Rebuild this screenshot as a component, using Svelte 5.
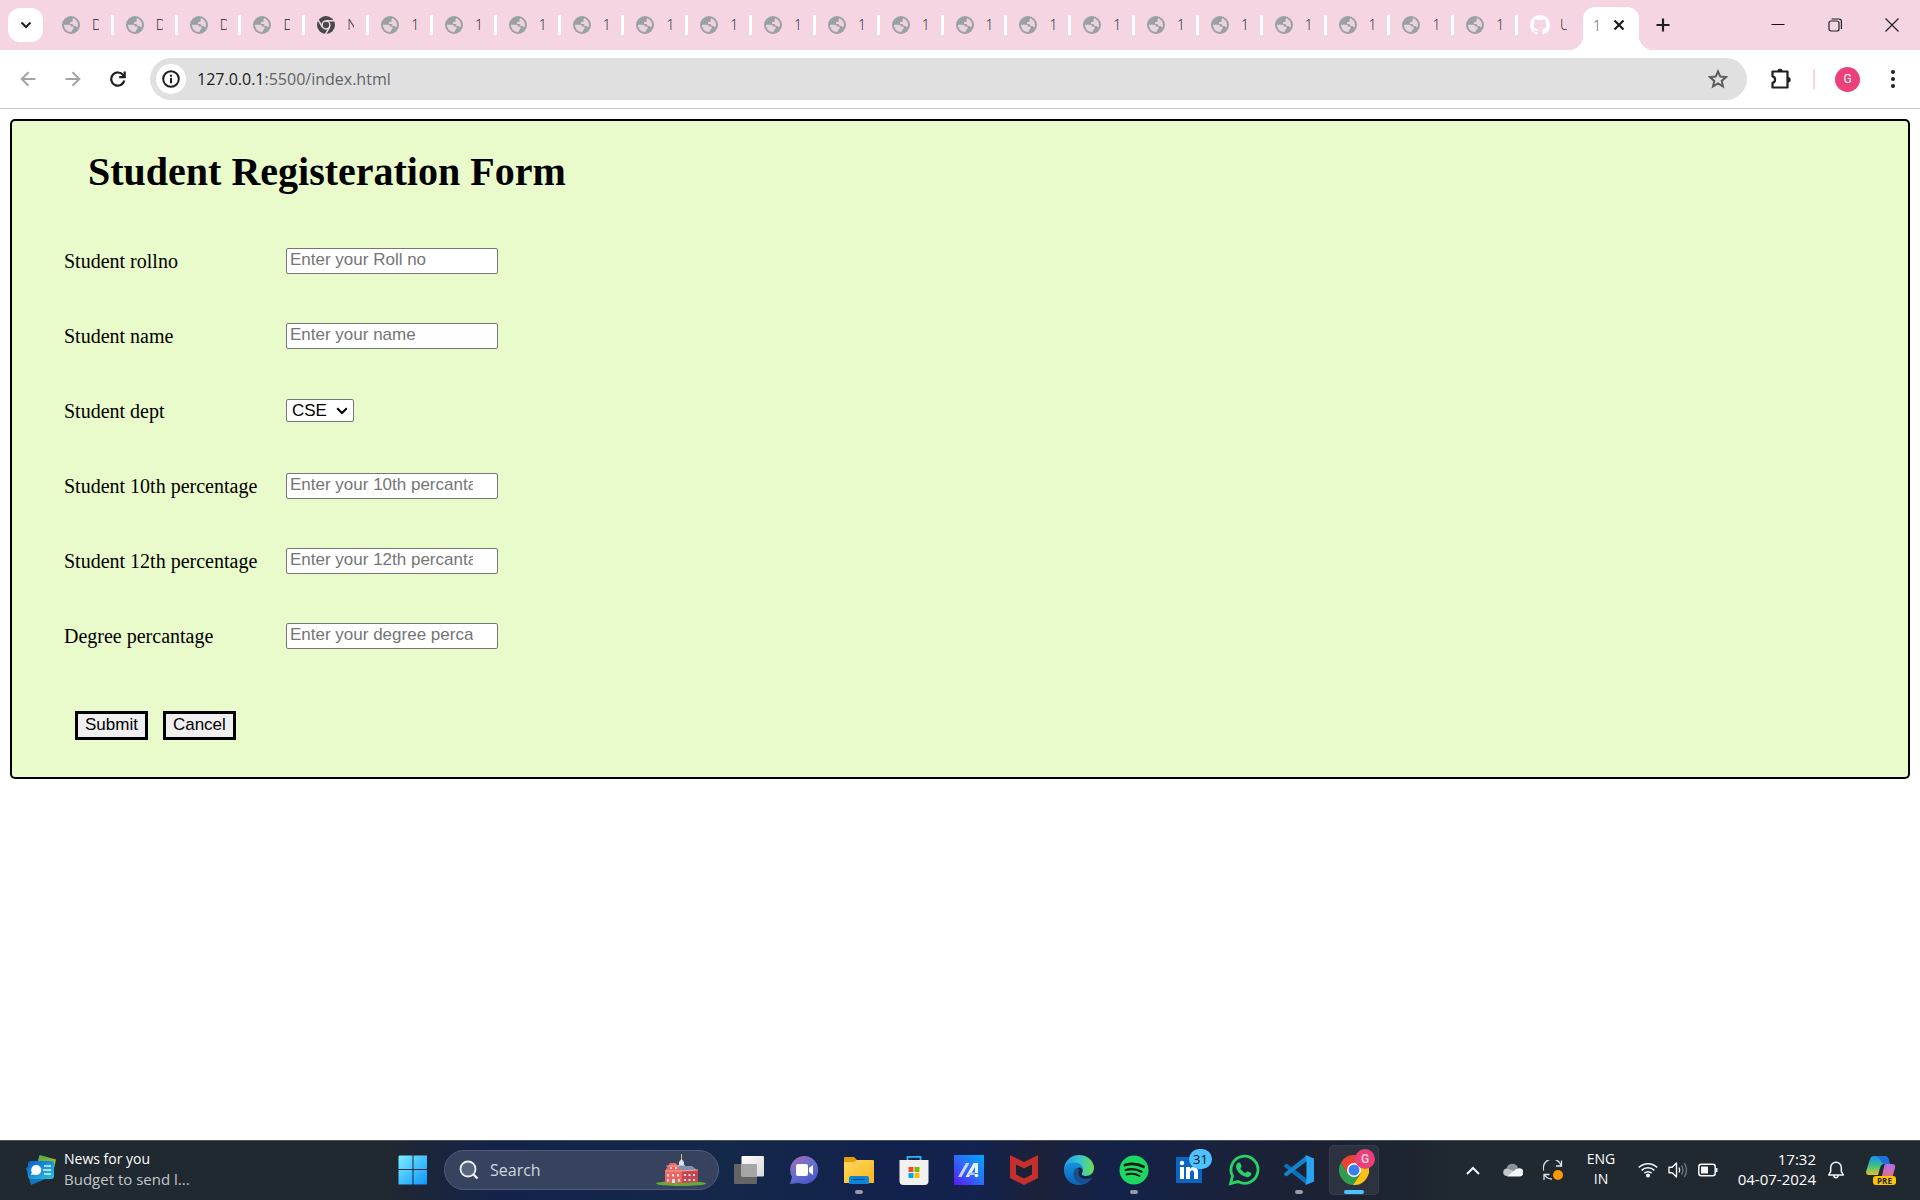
<script>
  const tabs = ['D', 'D', 'D', 'D', 'N', ...Array(18).fill('1')];

  const fields = [
    { id: 'rollno', label: 'Student rollno', placeholder: 'Enter your Roll no' },
    { id: 'name', label: 'Student name', placeholder: 'Enter your name' },
    { id: 'dept', label: 'Student dept', options: ['CSE', 'ECE', 'EEE', 'IT'] },
    { id: 'tenth', label: 'Student 10th percentage', placeholder: 'Enter your 10th percantage' },
    { id: 'twelfth', label: 'Student 12th percentage', placeholder: 'Enter your 12th percantage' },
    { id: 'degree', label: 'Degree percantage', placeholder: 'Enter your degree percantage' }
  ];
</script>

<div class="screen">
  <header class="tabstrip">
    <button class="tabsearch" aria-label="Search tabs">
      <svg width="12" height="8" viewBox="0 0 12 8"><path d="M1.5 1.5 6 6l4.500-4.500" fill="none" stroke="#1f1f1f" stroke-width="2" /></svg>
    </button>
    <div class="tabs">
      {#each tabs as t}
        <button class="tab">
          {#if t === 'N'}
            <svg width="18" height="18" viewBox="0 0 18 18">
              <circle cx="9" cy="9" r="9" fill="#46494d" />
              <circle cx="9" cy="9" r="3.900" fill="none" stroke="#f6d5e3" stroke-width="1.500" />
              <path d="M9 4.800h8.200M5.400 11.200 1.300 4.200M12.600 11.200 8.600 18" stroke="#f6d5e3" stroke-width="1.500" />
            </svg>
          {:else}
            <svg width="18" height="18" viewBox="0 0 18 18">
              <circle cx="9" cy="9" r="9" fill="#9aa0a6" />
              <path d="M2 8.800h5.500q1.500 0 1.500 1.700h2.300q1.300 1.900-.8 3.200L9.300 16C5 16.200 2 13 2 8.800z" fill="#ead3dd" />
              <path d="M11 2.300C14 3 16 6 16 9c-.1 1-.5 1.900-1 2.500L13.500 10h-1.800L10.500 8H8V6.200l2.500-.4V4z" fill="#ead3dd" />
            </svg>
          {/if}
          <span>{t}</span>
        </button>
      {/each}
    </div>
    <button class="tab github">
      <svg width="20" height="20" viewBox="0 0 16 16"><path fill="#fff" d="M8 0C3.580 0 0 3.580 0 8c0 3.540 2.290 6.530 5.470 7.590.4.070.55-.17.55-.38 0-.19-.01-.82-.01-1.490-2.010.37-2.530-.49-2.690-.94-.09-.23-.48-.94-.82-1.130-.28-.15-.68-.52-.01-.53.63-.01 1.080.58 1.230.82.72 1.210 1.870.87 2.330.66.07-.52.28-.87.51-1.070-1.780-.2-3.640-.89-3.640-3.950 0-.87.31-1.590.82-2.150-.08-.2-.36-1.020.08-2.120 0 0 .67-.21 2.200.82a7.600 7.600 0 0 1 4 0c1.530-1.040 2.200-.82 2.200-.82.44 1.100.16 1.920.08 2.120.51.56.82 1.270.82 2.150 0 3.070-1.870 3.750-3.650 3.950.29.25.54.73.54 1.480 0 1.070-.01 1.930-.01 2.200 0 .21.15.46.55.38A8 8 0 0 0 16 8c0-4.420-3.580-8-8-8z" /></svg>
      <span>U</span>
    </button>
    <div class="active">
      <span>1</span>
      <button aria-label="Close tab">
        <svg width="12" height="12" viewBox="0 0 12 12"><path d="M1.500 1.500l9 9m0-9l-9 9" stroke="#1f1f1f" stroke-width="2.200" /></svg>
      </button>
    </div>
    <button class="newtab" aria-label="New tab">
      <svg width="14" height="14" viewBox="0 0 14 14"><path d="M7 .5v13M.5 7h13" stroke="#1f1f1f" stroke-width="2.200" /></svg>
    </button>
    <div class="window">
      <button aria-label="Minimize"><svg width="14" height="14" viewBox="0 0 14 14"><path d="M.5 6.500h13" stroke="#111" /></svg></button>
      <button aria-label="Restore"><svg width="14" height="14" viewBox="0 0 14 14" fill="none" stroke="#222" stroke-width="1.200"><rect x="1" y="3" width="10" height="10" rx="2" /><path d="M3.500 1h7.500a2.500 2.500 0 0 1 2.400 2.500V11" /></svg></button>
      <button aria-label="Close"><svg width="14" height="14" viewBox="0 0 14 14"><path d="M.5.5l13 13m0-13l-13 13" stroke="#222" stroke-width="1.200" /></svg></button>
    </div>
  </header>

  <nav class="toolbar">
    <button class="nav" aria-label="Back"><svg width="16" height="16" viewBox="0 0 16 16" fill="none" stroke="#a3a3a3" stroke-width="2"><path d="M15.500 8H2M8.500 1.200 1.700 8l6.800 6.800" /></svg></button>
    <button class="nav" aria-label="Forward"><svg width="16" height="16" viewBox="0 0 16 16" fill="none" stroke="#a3a3a3" stroke-width="2"><path d="M.5 8H14M7.500 1.200 14.300 8l-6.800 6.800" /></svg></button>
    <button class="nav" aria-label="Reload"><svg width="16" height="16" viewBox="0 0 16 16" fill="none" stroke="#1f1f1f" stroke-width="2.200"><path d="M14.300 9.500A6.600 6.600 0 1 1 13.200 4.200L14.500 6" /><path d="M14.700.5v5.700H9.200" /></svg></button>
    <div class="omnibox">
      <button class="info" aria-label="View site information">
        <svg width="18" height="18" viewBox="0 0 18 18"><circle cx="9" cy="9" r="7.800" fill="none" stroke="#1f1f1f" stroke-width="2" /><path d="M9 8v5.200M9 4.700v2" stroke="#1f1f1f" stroke-width="2" /></svg>
      </button>
      <span class="url">127.0.0.1<i>:5500/index.html</i></span>
      <button class="star" aria-label="Bookmark this tab"><svg width="20" height="20" viewBox="0 0 20 20"><path d="M10 2.400l2.300 5.200 5.700.5-4.300 3.800 1.300 5.600-5-3-5 3 1.300-5.600L2 8.100l5.700-.5z" fill="none" stroke="#5a5c5e" stroke-width="2" /></svg></button>
    </div>
    <button class="ext" aria-label="Extensions"><svg width="22" height="22" viewBox="0 0 22 22"><path d="M2.500 3.500h15v16h-15v-4.700c3.400-.5 3.400-6 0-6.500z" fill="none" stroke="#1f1f1f" stroke-width="2.200" stroke-linejoin="round" /><path d="M7.300 3.500a2.700 2.700 0 0 1 5.400 0zM18 9a2.700 2.700 0 0 1 0 5.400z" fill="#1f1f1f" /></svg></button>
    <span class="bar"></span>
    <button class="avatar" aria-label="Profile">G</button>
    <button class="more" aria-label="Menu"><svg width="4" height="18" viewBox="0 0 4 18" fill="#1f1f1f"><circle cx="2" cy="2" r="2" /><circle cx="2" cy="9" r="2" /><circle cx="2" cy="16" r="2" /></svg></button>
  </nav>

  <main>
    <form onsubmit={(e) => e.preventDefault()}>
      <h1>Student Registeration Form</h1>
      <div class="rows">
        {#each fields as f}
          <div class="row">
            <label for={f.id}>{f.label}</label>
            {#if f.options}
              <span class="selectwrap">
                <select id={f.id}>
                  {#each f.options as o}<option>{o}</option>{/each}
                </select>
                <svg width="12" height="8" viewBox="0 0 12 8"><path d="M1.200 1.200 6 6l4.800-4.800" fill="none" stroke="#000" stroke-width="2" /></svg>
              </span>
            {:else}
              <input id={f.id} placeholder={f.placeholder} />
            {/if}
          </div>
        {/each}
      </div>
      <div class="actions">
        <button type="submit">Submit</button>
        <button type="reset">Cancel</button>
      </div>
    </form>
  </main>

  <footer class="taskbar">
    <button class="widget">
      <svg width="30" height="30" viewBox="0 0 30 30">
        <defs>
          <linearGradient id="nb" x2="1" y2="1"><stop stop-color="#0b62d0" /><stop offset="1" stop-color="#29c3e0" /></linearGradient>
          <linearGradient id="ng" x2="1" y2="1"><stop stop-color="#3fae54" /><stop offset="1" stop-color="#d9b512" /></linearGradient>
        </defs>
        <path d="M13.500 0 30 4.500 27 18 10 12z" fill="url(#ng)" />
        <path d="M0 13l4-2 18 12L5 30z" fill="#1277bd" />
        <rect x="2" y="6" width="26" height="18" rx="3" fill="url(#nb)" />
        <path d="M10.500 10a5 5 0 1 1-2.400 9.500L5 20l.8-2.600A5 5 0 0 1 10.500 10z" fill="#fff" />
        <path d="M18 11h7M17 15h8M18 19h7" stroke="#d9f4ff" stroke-width="1.600" />
      </svg>
      <span class="news">News for you<small>Budget to send l...</small></span>
    </button>

    <div class="apps">
      <button class="app" aria-label="Start">
        <svg width="30" height="30" viewBox="0 0 30 30">
          <defs><linearGradient id="win" gradientUnits="userSpaceOnUse" x1="0" y1="0" x2="30" y2="30"><stop stop-color="#7df0ff" /><stop offset="1" stop-color="#0a93ff" /></linearGradient></defs>
          <path d="M1.500.5H14.500V14H.5V1.500zM15.500 .5h13.500V14H15.500zM.5 15H14.500v14.500H.5zM15.500 15h13.500v14.500H15.500z" fill="url(#win)" />
        </svg>
      </button>
      <label class="search">
        <svg width="20" height="20" viewBox="0 0 20 20"><circle cx="9" cy="9" r="7.500" fill="#58637c" stroke="#eef0f4" stroke-width="1.800" /><path d="M14.500 14.500 18.500 18.500" stroke="#eef0f4" stroke-width="2.400" /></svg>
        <input type="text" placeholder="Search" aria-label="Search" />
        <svg width="50" height="32" viewBox="0 0 50 32">
          <ellipse cx="25" cy="29.500" rx="25" ry="2.500" fill="#68a83a" />
          <path d="M25.500 0v6" stroke="#d9b860" stroke-width="1" />
          <path d="M23 11v-3l2.500-3L28 8v3z" fill="#d5e2f5" /><path d="M22 11h7v6h-7z" fill="#a9bde0" />
          <path d="M19 17l5-5 12 0 6 5-16 3z" fill="#8290ad" />
          <path d="M9 17l3-5 2-3h6l2 3 4 5v12H9z" fill="#ee655e" /><path d="M26 17l16-1v12l-16 1z" fill="#c9454d" />
          <path d="M9 17h17M10.500 12H22M26 17l16-1" stroke="#f4a59b" />
          <path d="M11 20h2v2.500h-2zM16 20h2v2.500h-2zM21 20h2v2.500h-2zM11 25h2v2.500h-2zM16 25h3v4h-3zM22 25h2v2.500h-2zM14 13h2v2h-2zM19 13h2v2h-2zM28 20h2v2h-2zM32.500 20h2v2h-2zM37 20h2v2h-2zM28 25h2v2h-2zM32.500 25h2v2h-2zM37 25h2v2h-2z" fill="#cfe0f2" />
        </svg>
      </label>
      <button class="app" aria-label="Task view">
        <svg width="30" height="28" viewBox="0 0 30 28">
          <defs><linearGradient id="tv" x2="1" y2="1"><stop stop-color="#fff" /><stop offset="1" stop-color="#d8d8d8" /></linearGradient></defs>
          <rect y="8" width="23" height="20" rx="1" fill="#646464" /><rect x="7.500" width="22.500" height="20.500" rx="1" fill="url(#tv)" /><path d="M7.500 8H22q1 0 1 1v11.500H7.500z" fill="#a6a6a6" />
        </svg>
      </button>
      <button class="app" aria-label="Chat">
        <svg width="30" height="30" viewBox="0 0 30 30">
          <defs><linearGradient id="ch" x1="0.200" x2="0.800" y2="1"><stop stop-color="#a169b8" /><stop offset=".5" stop-color="#6270cf" /><stop offset="1" stop-color="#4b4fc4" /></linearGradient></defs>
          <path d="M15 1a14 14 0 1 1-5 27L1 29l2-7A14 14 0 0 1 15 1z" fill="url(#ch)" />
          <rect x="7" y="9" width="12" height="12" rx="2" fill="#fff" /><path d="M20 13l4-3v10l-4-3z" fill="#fff" />
        </svg>
      </button>
      <button class="app run" aria-label="File Explorer">
        <svg width="30" height="28" viewBox="0 0 30 28">
          <defs><linearGradient id="fo" x2="1" y2="1"><stop stop-color="#ffd75e" /><stop offset="1" stop-color="#fbb61a" /></linearGradient></defs>
          <path d="M0 2q0-1 1-1h9l3 3h14v8H0z" fill="#e59f0b" /><path d="M0 6h10l3-2h16q1 0 1 1v22H0z" fill="url(#fo)" />
          <path d="M5 28v-6q0-2 2-2h16q2 0 2 2v6z" fill="#0f84d6" /><path d="M9 23.500h12" stroke="#0a4c8c" stroke-width="1.200" />
        </svg>
      </button>
      <button class="app" aria-label="Microsoft Store">
        <svg width="30" height="30" viewBox="0 0 30 30">
          <path d="M8.500 6V1.800h13V6" fill="none" stroke="#2fb4ee" stroke-width="1.800" /><path d="M.5 5h29v21q0 4-4 4h-21q-4 0-4-4z" fill="#f1f1f1" />
          <path d="M9.500 12h5v5h-5z" fill="#f25022" /><path d="M15.500 12h5v5h-5z" fill="#7fba00" /><path d="M9.500 18h5v5h-5z" fill="#00a4ef" /><path d="M15.500 18h5v5h-5z" fill="#ffb900" />
        </svg>
      </button>
      <button class="app" aria-label="MyASUS">
        <svg width="30" height="30" viewBox="0 0 30 30">
          <defs><linearGradient id="as" x1="0" y1="1" x2="1" y2="0"><stop stop-color="#5a16f5" /><stop offset=".5" stop-color="#2b6cf8" /><stop offset="1" stop-color="#00a8ff" /></linearGradient></defs>
          <path d="M0 0h30v30H0z" fill="url(#as)" /><path d="M4 22 12 8h3.500L7.500 22z" fill="#c9d2ff" /><path d="M11.500 22 19.500 8H24v10h-3v-6l-6 10z" fill="#eaf0ff" /><path d="M15 17.500h5.500V20h-7z" fill="#b8c8ff" /><circle cx="22.500" cy="20.500" r="1.800" fill="#fff" />
        </svg>
      </button>
      <button class="app" aria-label="McAfee">
        <svg width="28" height="30" viewBox="0 0 28 30"><path d="M0 0l14 7L28 0v23l-14 7-14-7z" fill="#c5302d" /><path d="M6 9.500l8 4 8-4v10l-8 4-8-4z" fill="#1b2135" /></svg>
      </button>
      <button class="app" aria-label="Edge">
        <svg width="30" height="30" viewBox="0 0 30 30">
          <defs>
            <linearGradient id="e1" x2="1"><stop stop-color="#1f9fe0" /><stop offset=".5" stop-color="#35c4d4" /><stop offset="1" stop-color="#6fe04b" /></linearGradient>
            <linearGradient id="e2" x2="0" y2="1"><stop stop-color="#1791dd" /><stop offset="1" stop-color="#0b62b8" /></linearGradient>
          </defs>
          <path d="M0 15C0 6 7 0 15 0c9 0 15 6.500 15 13 0 5-4 8-8 8-3 0-5-1-4-3 2-3 0-7-6-7-5 0-10 2-12 4z" fill="url(#e1)" />
          <path d="M0 15c1-5 5-7.500 10-7.500 6 0 9 3.500 9 7.500-1-2-3-3-5-2-4 2-4 7-1 11 3 3 7 4 11 3-3 2-6 3-9 3C7 30 0 24 0 15z" fill="url(#e2)" />
          <path d="M11 14c-4 5 0 15 9 15 4-1 7-4 8.500-6.500-5 2-11 2-13-1.500-1.500-2-1-4 0-5.500-1-2-3-2.500-4.500-1.500z" fill="#15508f" />
        </svg>
      </button>
      <button class="app run" aria-label="Spotify">
        <svg width="30" height="30" viewBox="0 0 30 30"><circle cx="15" cy="15" r="14.500" fill="#1ed760" /><g fill="none" stroke="#0b1a12" stroke-linecap="round"><path d="M6 10c6-1.800 13-1.300 18.500 1.800" stroke-width="2.800" /><path d="M6.800 15c5.200-1.500 11-1 15.700 1.700" stroke-width="2.300" /><path d="M7.500 19.500c4.500-1.200 9-.8 13 1.500" stroke-width="1.900" /></g></svg>
      </button>
      <button class="app" aria-label="LinkedIn">
        <svg width="26" height="26" viewBox="0 0 26 26"><rect width="26" height="26" rx="1" fill="#0a66c2" /><path d="M4 10h4v12H4zM10 10h4v2c2-3.500 8-3 8 3v7h-4v-6c0-4-4-3.500-4 0v6h-4z" fill="#fff" /><circle cx="6" cy="6" r="2.200" fill="#fff" /></svg>
        <b class="badge">31</b>
      </button>
      <button class="app" aria-label="WhatsApp">
        <svg width="32" height="32" viewBox="0 0 32 32"><path d="M2.500 29.500l2-7.500A13.500 13.500 0 1 1 10 27.600z" fill="none" stroke="#25d366" stroke-width="2.800" /><path d="M11 8.500c.8 0 1.100.1 1.500 1l1.100 2.700c.3.800-.8 1.700-1.300 2.300 1.200 2.200 3 3.800 5.300 4.800.8-.8 1.500-2.200 2.300-1.900l2.900 1.400c.7.300.5 1.500.1 2.300-.8 1.500-2.700 2.200-4.200 2-5-.9-9.300-4.900-10.500-9.300-.4-2 .7-5.300 2.800-5.300z" fill="#25d366" /></svg>
      </button>
      <button class="app run" aria-label="Visual Studio Code">
        <svg width="30" height="30" viewBox="0 0 30 30"><path d="M0 10.500l2.500-2L23 24v6L0 11.500z" fill="#0a72bd" /><path d="M0 19.500l2.500 2L23 6V0L0 18.500z" fill="#1484ce" /><path d="M21.500 0 30 3.500v23L21.500 30l1-6V6z" fill="#2aa4f0" /></svg>
      </button>
      <button class="app current" aria-label="Google Chrome">
        <svg width="30" height="30" viewBox="0 0 30 30">
          <path d="M2 7.500A15 15 0 0 1 28 7.500H15L8.500 19z" fill="#ea4335" /><path d="M2 7.500A15 15 0 0 0 14 30l7-11.500H8.500z" fill="#2f9e4f" /><path d="M28 7.500A15 15 0 0 1 14 30l7.500-11.500L15 7.500z" fill="#fbc116" />
          <circle cx="15" cy="15" r="7" fill="#fff" /><circle cx="15" cy="15" r="5.500" fill="#3a7ff0" />
        </svg>
        <b class="badge pink">G</b>
      </button>
    </div>

    <div class="tray">
      <button aria-label="Hidden icons" class="cell"><svg width="14" height="9" viewBox="0 0 14 9"><path d="M1 8l6-6 6 6" fill="none" stroke="#f4f4f4" stroke-width="2" /></svg></button>
      <button aria-label="OneDrive" class="cell"><svg width="20" height="14" viewBox="0 0 20 14"><path d="M3.500 6A6 6 0 0 1 15 4.500L10 9z" fill="#8d9297" /><path d="M4 13a3.700 3.700 0 0 1 0-7.500l9 3.500-5 4z" fill="#c3c6c9" /><path d="M4 13.500 13 6a5 5 0 0 1 3.500-.8 4 4 0 0 1 0 8.300z" fill="#f4f5f6" /></svg></button>
      <button aria-label="Windows Update" class="cell"><svg width="20" height="20" viewBox="0 0 20 20"><g fill="none" stroke="#dfe1e3" stroke-width="1.300"><path d="M.7 10.500A9 9 0 0 1 18 5.500M18.500.5V6h-5.500M9 19a9 9 0 0 1-7.500-4M1 20v-5.500h5.500" /></g><circle cx="15" cy="15" r="5" fill="#ff9800" /></svg></button>
      <button class="lang">ENG<br />IN</button>
      <button class="status" aria-label="Network, volume and battery">
        <svg width="20" height="16" viewBox="0 0 20 16" fill="none" stroke="#f4f4f4" stroke-width="1.500"><path d="M.8 5.500a13 13 0 0 1 18.400 0M3.600 8.400a9 9 0 0 1 12.800 0M6.300 11.200a5.200 5.200 0 0 1 7.400 0" /><circle cx="10" cy="13.500" r="1.300" fill="#f4f4f4" /></svg>
        <svg width="20" height="18" viewBox="0 0 20 18" fill="none" stroke="#f4f4f4" stroke-width="1.400"><path d="M1 6.200h3.200L8.500 2v14l-4.300-4.200H1z" stroke-linejoin="round" /><path d="M11 6.500q1.500 2.500 0 5" /><path d="M13.500 4.500q3 4.500 0 9M16.300 2.200q4.500 6.800 0 13.600" stroke="#6f757b" /></svg>
        <svg width="20" height="14" viewBox="0 0 20 14"><rect x=".8" y="1.200" width="16.400" height="11.600" rx="2.500" fill="none" stroke="#f4f4f4" stroke-width="1.500" /><path d="M3 3.500h7v7H3zM18 5h1.500v4H18z" fill="#f4f4f4" /></svg>
      </button>
      <button class="clock">17:32<br />04-07-2024</button>
      <button class="cell" aria-label="Notifications"><svg width="18" height="18" viewBox="0 0 18 18" fill="none" stroke="#f4f4f4" stroke-width="1.500"><path d="M9 1.200a5.300 5.300 0 0 0-5.300 5.300v3.800L1.700 14h14.600l-2-3.700V6.500A5.300 5.300 0 0 0 9 1.200zM6.800 14.500a2.200 2.200 0 0 0 4.400 0" stroke-linejoin="round" /></svg></button>
      <button class="copilot" aria-label="Copilot">
        <svg width="30" height="28" viewBox="0 0 30 28">
          <defs>
            <linearGradient id="c1" x2="0" y2="1"><stop stop-color="#1b8cf0" /><stop offset=".5" stop-color="#3cbf8a" /><stop offset="1" stop-color="#e3c32a" /></linearGradient>
            <linearGradient id="c2" x2="0" y2="1"><stop stop-color="#b06bf0" /><stop offset="1" stop-color="#f0706a" /></linearGradient>
          </defs>
          <path d="M8 0h10q3 0 4 4l1 4h-5q-3 0-4 4l-2 7H3q-4 0-2.500-5L4 3q1-3 4-3z" fill="url(#c1)" /><path d="M10 0h9q3 0 4 4l1 4h-6q-2 0-3-3t-5-5z" fill="#1d6fe0" />
          <path d="M19 8h7q4 0 3 4l-2 7q-1 5-5 5H12q3 0 4-4l2-9q.3-2 1-3z" fill="url(#c2)" />
        </svg>
        <b>PRE</b>
      </button>
    </div>
  </footer>
</div>

<style>
  :global(body) { margin: 0; background: #fff; }
  .screen { min-height: 100vh; display: flex; flex-direction: column; font-family: "Open Sans", "Noto Sans", sans-serif; }
  button { border: 0; background: none; padding: 0; margin: 0; font: inherit; color: inherit; display: flex; align-items: center; justify-content: center; }
  svg { display: block; flex: none; }

  .tabstrip { height: 50px; background: #f6d5e3; display: flex; align-items: center; }
  .tabsearch { width: 35px; height: 34px; margin: 0 7px 0 8px; border-radius: 12px; background: #fff; flex: none; }
  .tabs { flex: 1; display: flex; min-width: 0; }
  .tab { flex: 1 1 0; min-width: 0; height: 20px; padding-left: 12px; justify-content: flex-start; gap: 12px; border-right: 3px solid #fff; font-size: 14px; font-weight: 300; color: #222; }
  .tab span { width: 7px; line-height: 20px; overflow: hidden; text-align: left; }
  .github { flex: 0 0 65px; border: 0; gap: 10px; }
  .active { position: relative; flex: none; width: 56px; height: 43px; align-self: flex-end; box-sizing: border-box; padding: 0 14px 7px 10px; display: flex; align-items: center; justify-content: space-between; background: #fff; border-radius: 12px 12px 0 0; font-size: 14px; font-weight: 300; color: #555; }
  .active::before, .active::after { content: ""; position: absolute; bottom: 0; width: 14px; height: 14px; }
  .active::before { right: 100%; background: radial-gradient(circle at 0 0, transparent 14px, #fff 14px); }
  .active::after { left: 100%; background: radial-gradient(circle at 100% 0, transparent 14px, #fff 14px); }
  .newtab { width: 48px; height: 34px; }
  .window { display: flex; margin-left: 62px; }
  .window button { width: 57px; height: 50px; }

  .toolbar { height: 58px; display: flex; align-items: center; border-bottom: 1px solid #cbcbcb; padding-left: 5px; }
  .nav { width: 45px; height: 40px; }
  .omnibox { flex: 1; height: 42px; margin-left: 10px; padding: 0 19px 0 6px; box-sizing: border-box; border-radius: 21px; background: #e0e0e0; display: flex; align-items: center; }
  .info { width: 30px; height: 30px; border-radius: 15px; background: #fff; }
  .url { flex: 1; margin-left: 11px; font: 16px "Open Sans", sans-serif; color: #202124; }
  .url i { font-style: normal; color: #5f6368; }
  .ext { width: 22px; margin-left: 23px; }
  .bar { width: 2px; height: 20px; background: #f6d5e3; margin-left: 21px; }
  .avatar { width: 25px; height: 25px; border-radius: 50%; background: #ec407a; color: #fff; font: 12px Roboto, sans-serif; margin-left: 20px; }
  .more { margin: 0 25px 0 31px; }

  main { flex: 1; padding: 10px; font-family: "Liberation Serif", serif; font-size: 20px; color: #000; }
  form { border: 2px solid #000; border-radius: 5px; background: #e9facb; padding: 28px 52px 37px; }
  h1 { margin: 0 0 28px 24px; font-size: 40px; line-height: 46px; }
  .row { display: flex; align-items: center; height: 75px; }
  label { width: 222px; padding-top: 2px; }
  .row input { box-sizing: border-box; width: 212px; height: 26px; border: 1px solid #767676; border-radius: 2px; padding: 0 24px 2px 3px; background: #fff; font: 17px "Liberation Sans", sans-serif; }
  .row input::placeholder { color: #757575; opacity: 1; }
  .selectwrap { display: flex; align-items: center; }
  select { appearance: none; box-sizing: border-box; width: 68px; height: 23px; border: 1px solid #767676; border-radius: 2px; padding: 0 5px; background: #fff; color: #000; font: 17px "Liberation Sans", sans-serif; }
  .selectwrap svg { margin-left: -18px; pointer-events: none; }
  .actions { display: flex; gap: 15px; margin: 38px 0 0 11px; }
  .actions button { box-sizing: border-box; height: 29px; border: 3px solid #000; padding: 0 7px 2px; background: #efefef; color: #000; font: 17px "Liberation Sans", sans-serif; }

  .taskbar { height: 60px; box-sizing: border-box; border-top: 1px solid #465058; padding-bottom: 1px; display: flex; align-items: center; color: #fff; background: linear-gradient(90deg, #202830 0, #202830 20%, #14224a 26%, #14284a 38%, #13224c 45%, #13224e 51%, #1b2138 54%, #14224a 58%, #1b2238 65%, #1c2233 70%, #202830 76%, #202830 100%); }
  .widget { width: 359px; margin-left: 26px; justify-content: flex-start; gap: 8px; flex: none; }
  .news { font-size: 14px; line-height: 20px; text-align: left; padding-bottom: 2px; }
  .news small { display: block; font-size: 15px; color: #c3c6c9; }
  .apps { display: flex; align-items: center; }
  .app { width: 55px; height: 50px; position: relative; flex: none; }
  .search { box-sizing: border-box; width: 275px; height: 40px; margin: 0 2px 0 4px; padding: 0 12px 0 14px; display: flex; align-items: center; border: 1px solid #515d78; border-radius: 20px; background: #36425e; }
  .search input { flex: 1; min-width: 0; border: 0; background: none; outline: 0; padding: 0 0 0 11px; font: 16px "Open Sans", sans-serif; color: #fff; }
  .search input::placeholder { color: #d2d6de; opacity: 1; }
  .run::after, .current::after { content: ""; position: absolute; bottom: 1px; left: 50%; margin-left: -4px; width: 8px; height: 4px; border-radius: 2px; background: #969aa8; }
  .current { width: 50px; margin-left: 3px; border-radius: 5px; background: #2c323f; box-shadow: inset 0 0 0 1px #383d48; }
  .current::after { width: 20px; margin-left: -10px; background: #4cc2ff; }
  .badge { position: absolute; top: 4px; right: 4px; width: 23px; height: 20px; border-radius: 10px; background: #4cc2ff; color: #111; font-size: 13px; line-height: 20px; font-weight: 400; }
  .pink { width: 20px; background: #ec407a; color: #fbd5e2; font: 500 12px/20px Roboto, sans-serif; }
  .tray { margin-left: auto; display: flex; align-items: center; font-size: 15px; line-height: 20px; }
  .cell { width: 40px; height: 40px; }
  .lang { width: 56px; padding-bottom: 2px; font-size: 14px; text-align: center; }
  .status { gap: 10px; margin-left: 9px; }
  .clock { width: 98px; padding-bottom: 2px; text-align: right; justify-content: flex-end; }
  .copilot { width: 50px; margin-right: 14px; position: relative; }
  .copilot b { position: absolute; left: 17px; bottom: -1px; width: 23px; height: 9px; border-radius: 3px; background: #ffc400; color: #222; font: 700 8px/9px "Open Sans", sans-serif; text-align: center; }
</style>
